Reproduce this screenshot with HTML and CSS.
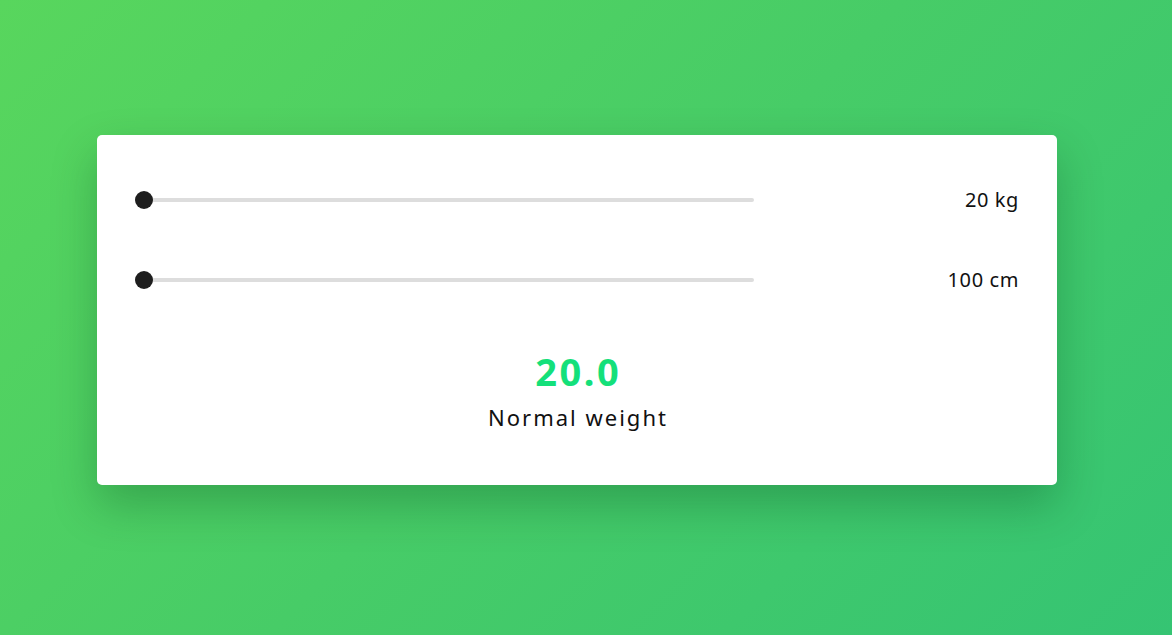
FILE: index.html
```html
<!DOCTYPE html>
<html>
<head>
<meta charset="utf-8">
<link rel="stylesheet" href="styles.css">
</head>
<body>
<div class="card">
  <div class="row">
    <input class="slider" type="range" min="20" max="200" value="20">
    <span class="value">20 kg</span>
  </div>
  <div class="row">
    <input class="slider" type="range" min="100" max="220" value="100">
    <span class="value">100 cm</span>
  </div>
  <div class="result">
    <div class="bmi">20.0</div>
    <div class="label">Normal weight</div>
  </div>
</div>
</body>
</html>
```
FILE: styles.css
```css
html, body { margin: 0; height: 100%; }
body {
  background: linear-gradient(135deg, #58d65d 0%, #47cc67 50%, #35c473 100%);
  font-family: "Noto Sans", "Open Sans", sans-serif;
  display: flex;
  justify-content: flex-start;
  padding: 135px 0 0 97px;
  box-sizing: border-box;
}
.card {
  width: 960px;
  height: 350px;
  box-sizing: border-box;
  background: #fff;
  border-radius: 5px;
  padding: 50px 38px 0 38px;
  box-shadow: 0 20px 45px rgba(0, 60, 20, 0.28);
  display: flex;
  flex-direction: column;
}
.row {
  height: 30px;
  display: flex;
  align-items: center;
  justify-content: space-between;
  margin-bottom: 50px;
}
.row + .row { margin-bottom: 0; }
.slider {
  -webkit-appearance: none;
  appearance: none;
  width: 619px;
  height: 18px;
  margin: 0;
  background: transparent;
}
.slider::-webkit-slider-runnable-track {
  height: 4px;
  background: #dddddd;
  border-radius: 2px;
}
.slider::-webkit-slider-thumb {
  -webkit-appearance: none;
  width: 18px;
  height: 18px;
  border-radius: 50%;
  background: #1e1e1e;
  margin-top: -7px;
}
.value {
  font-size: 20px;
  letter-spacing: 0.6px;
  padding-bottom: 2px;
  color: #111;
}
.result {
  margin-top: 54px;
  display: flex;
  flex-direction: column;
  align-items: center;
}
.bmi {
  font-size: 38px;
  font-weight: 700;
  color: #14e07a;
  line-height: 44px;
  letter-spacing: 2.5px;
  padding-left: 2.5px;
}
.label {
  margin-top: 9px;
  font-size: 22px;
  line-height: 30px;
  letter-spacing: 2px;
  padding-left: 2px;
  color: #111;
}
```
